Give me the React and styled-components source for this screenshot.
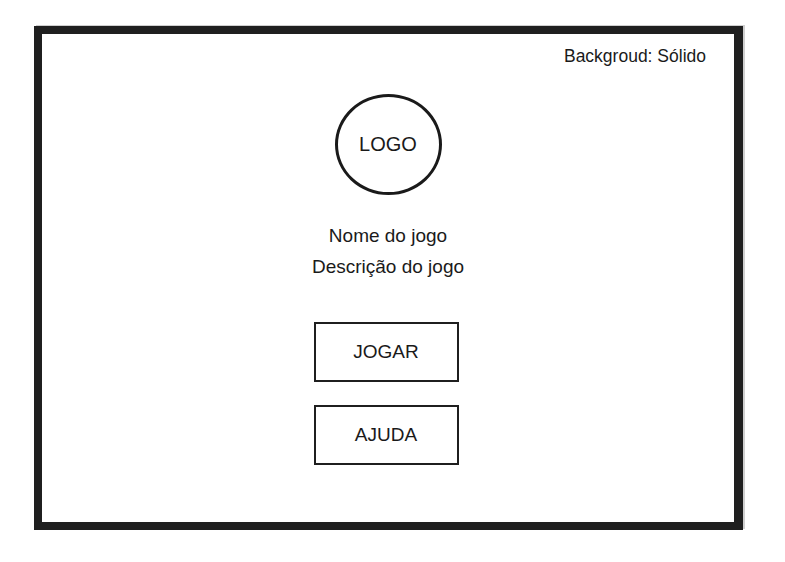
import React from 'react';
import styled, {createGlobalStyle} from 'styled-components';

const GlobalStyle = createGlobalStyle`
  html, body {
    margin: 0;
    padding: 0;
    background: #ffffff;
  }
  body {
    font-family: "Liberation Sans", Arial, sans-serif;
    color: #1a1a1a;
  }
`;

const Frame = styled.div`
  box-sizing: border-box;
  width: 709px;
  height: 504px;
  margin: 26px 0 0 34px;
  border: 8px solid #1f1f1f;
  border-right-width: 9px;
  box-shadow: 2px -1px 0 #cfcfcf;
  display: flex;
  flex-direction: column;
  align-items: center;
  padding: 12px 28px 0;
`;

const Note = styled.p`
  align-self: flex-end;
  margin: 0;
  font-size: 17.5px;
  line-height: 20px;
  color: #1a1a1a;
`;

const Logo = styled.div`
  box-sizing: border-box;
  width: 107px;
  height: 101px;
  margin-top: 28px;
  border: 3px solid #1a1a1a;
  border-radius: 50%;
  display: flex;
  align-items: center;
  justify-content: center;
  font-size: 20px;
  color: #1a1a1a;
`;

const Info = styled.div`
  margin-top: 25px;
  display: flex;
  flex-direction: column;
  align-items: center;
`;

const Line = styled.p`
  margin: 0;
  font-size: 19px;
  line-height: 31px;
  color: #1a1a1a;
`;

const Actions = styled.div`
  margin: 40px 4px 0 0;
  display: flex;
  flex-direction: column;
  gap: 23px;
`;

const Button = styled.button`
  box-sizing: border-box;
  width: 145px;
  height: 60px;
  background: #fff;
  border: 2px solid #1f1f1f;
  border-radius: 0;
  font-family: "Liberation Sans", Arial, sans-serif;
  font-size: 19px;
  color: #1a1a1a;
  display: flex;
  align-items: center;
  justify-content: center;
  padding: 0;
  cursor: pointer;
`;

export default function App() {
    return (
        <>
            <GlobalStyle/>
            <Frame>
                <Note>Backgroud: Sólido</Note>
                <Logo>LOGO</Logo>
                <Info>
                    <Line>Nome do jogo</Line>
                    <Line>Descrição do jogo</Line>
                </Info>
                <Actions>
                    <Button>JOGAR</Button>
                    <Button>AJUDA</Button>
                </Actions>
            </Frame>
        </>
    );
}
